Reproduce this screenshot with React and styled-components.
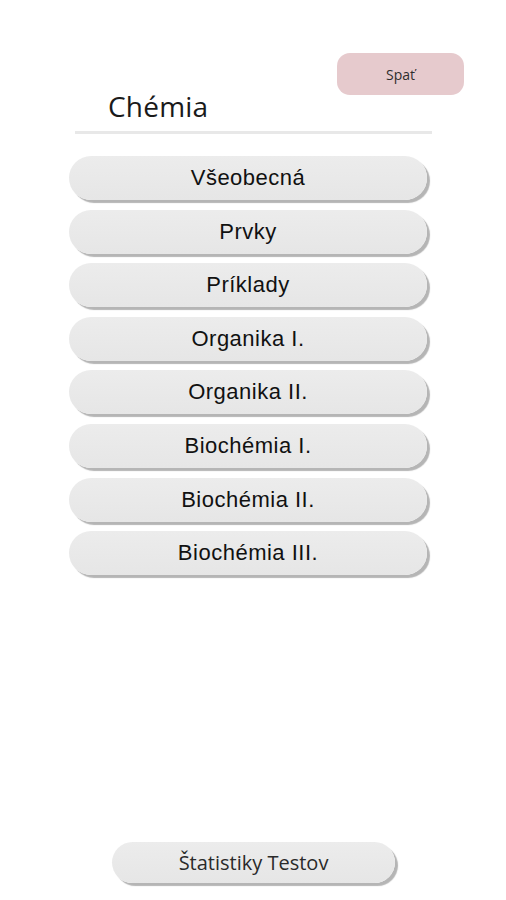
import React from "react";
import styled, { createGlobalStyle } from "styled-components";

const GlobalStyle = createGlobalStyle`
    html, body {
        margin: 0;
        padding: 0;
        background: #ffffff;
    }
    * {
        box-sizing: border-box;
    }
`

const Page = styled.div`
    width: 506px;
    height: 900px;
    display: flex;
    flex-direction: column;
    font-family: "Open Sans", "Liberation Sans", sans-serif;
    padding-bottom: 17px;
`

const Header = styled.div`
    display: flex;
    flex-direction: column;
    padding-top: 53px;
`

const BackButton = styled.button`
    align-self: flex-start;
    margin-left: 337px;
    width: 127px;
    height: 42px;
    border: none;
    border-radius: 13px;
    background: #e6cacd;
    color: #2e2e2e;
    font-family: "Open Sans", sans-serif;
    font-size: 14px;
    cursor: pointer;
`

const Title = styled.h1`
    margin: -3px 0 0 108px;
    font-family: "Open Sans", sans-serif;
    font-weight: 400;
    font-size: 28px;
    line-height: 28px;
    letter-spacing: 0.2px;
    color: #1a1a1a;
`

const Divider = styled.hr`
    margin: 11px 0 0 75px;
    width: 357px;
    height: 3px;
    border: none;
    background: #e8e8e8;
`

const List = styled.div`
    display: flex;
    flex-direction: column;
    gap: 9.6px;
    margin: 22px 0 0 69px;
`

const PillButton = styled.button`
    width: ${props => props.width}px;
    height: ${props => props.height}px;
    padding: 0;
    border: none;
    border-radius: 22px;
    background: linear-gradient(to bottom, #ececec, #e6e6e6);
    box-shadow: 3px 3px 1px #b5b5b5;
    color: ${props => props.color || "#111"};
    font-family: ${props => props.font};
    font-size: ${props => props.size}px;
    letter-spacing: ${props => props.spacing || 0}px;
    cursor: pointer;
`

const Footer = styled.div`
    margin-top: auto;
    padding-left: 112px;
`

const topics = [
    "Všeobecná",
    "Prvky",
    "Príklady",
    "Organika I.",
    "Organika II.",
    "Biochémia I.",
    "Biochémia II.",
    "Biochémia III.",
]

export default function App() {
    return (
        <Page>
            <GlobalStyle />
            <Header>
                <BackButton>Spať</BackButton>
                <Title>Chémia</Title>
            </Header>
            <Divider />
            <List>
                {topics.map(topic => (
                    <PillButton
                        key={topic}
                        width={358}
                        height={44}
                        size={22}
                        spacing={0.5}
                        font={'"Liberation Sans", Arial, sans-serif'}
                    >
                        {topic}
                    </PillButton>
                ))}
            </List>
            <Footer>
                <PillButton
                    width={283}
                    height={41}
                    size={20}
                    color="#2a2a2a"
                    font={'"Open Sans", sans-serif'}
                >
                    Štatistiky Testov
                </PillButton>
            </Footer>
        </Page>
    );
}
